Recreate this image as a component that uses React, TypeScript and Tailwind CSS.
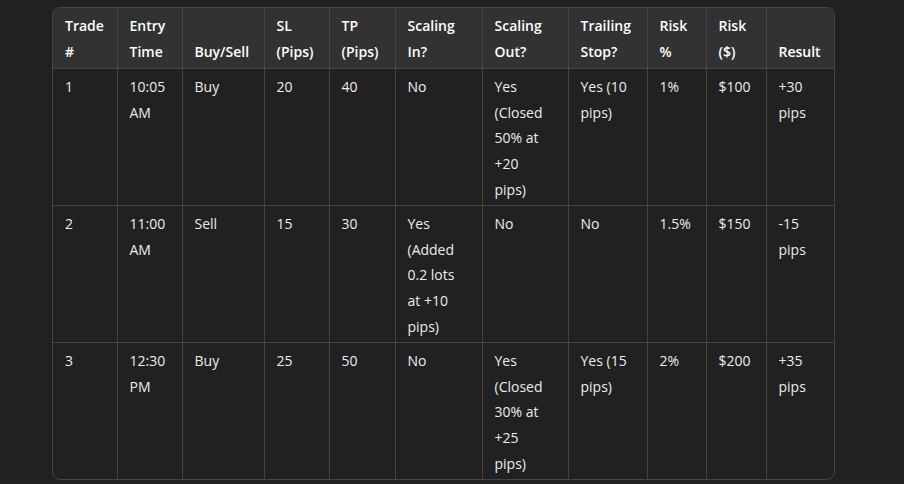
const cols = [
  { w: "w-[64px]", head: "Trade #" },
  { w: "w-[65px]", head: "Entry Time" },
  { w: "w-[82px]", head: "Buy/Sell" },
  { w: "w-[65px]", head: "SL (Pips)" },
  { w: "w-[66px]", head: "TP (Pips)" },
  { w: "w-[87px]", head: "Scaling In?" },
  { w: "w-[86px]", head: "Scaling Out?" },
  { w: "w-[79px]", head: "Trailing Stop?" },
  { w: "w-[59px]", head: "Risk %" },
  { w: "w-[60px]", head: "Risk ($)" },
  { w: "w-[70px]", head: "Result" },
];

const rows = [
  ["1", "10:05 AM", "Buy", "20", "40", "No", "Yes (Closed 50% at +20 pips)", "Yes (10 pips)", "1%", "$100", "+30 pips"],
  ["2", "11:00 AM", "Sell", "15", "30", "Yes (Added 0.2 lots at +10 pips)", "No", "No", "1.5%", "$150", "-15 pips"],
  ["3", "12:30 PM", "Buy", "25", "50", "No", "Yes (Closed 30% at +25 pips)", "Yes (15 pips)", "2%", "$200", "+35 pips"],
];

export default function App() {
  return (
    <div className="min-h-[484px] bg-[#212121] pt-[7px] pl-[52px] font-['Open_Sans',sans-serif] text-[14px] leading-[25.6px]">
      <div className="w-[783px] rounded-lg border border-[#444444] overflow-hidden">
        <table className="w-full table-fixed border-collapse">
          <colgroup>
            {cols.map((c) => (
              <col key={c.head} className={c.w} />
            ))}
          </colgroup>
          <thead>
            <tr className="bg-[#323232]">
              {cols.map((c, i) => (
                <th
                  key={c.head}
                  className={`align-bottom text-left font-semibold text-white pl-[12px] pr-[14px] pt-[5px] pb-[4px] border-b border-[#444444] ${i > 0 ? "border-l" : ""}`}
                >
                  {c.head}
                </th>
              ))}
            </tr>
          </thead>
          <tbody>
            {rows.map((r, ri) => (
              <tr key={ri} className={ri < rows.length - 1 ? "border-b border-[#444444]" : ""}>
                {r.map((cell, i) => (
                  <td
                    key={i}
                    className={`align-top text-[#ececec] pl-[12px] pr-[14px] pt-[5px] pb-[3px] ${i > 0 ? "border-l border-[#444444]" : ""}`}
                  >
                    {cell}
                  </td>
                ))}
              </tr>
            ))}
          </tbody>
        </table>
      </div>
    </div>
  );
}
